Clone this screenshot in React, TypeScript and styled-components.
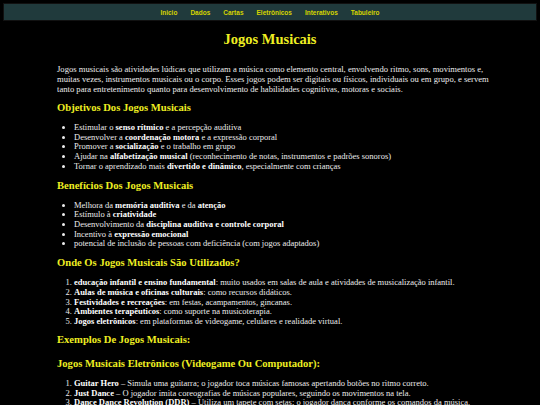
import React from "react";
import styled, { createGlobalStyle } from "styled-components";

const GlobalStyle = createGlobalStyle`
  html, body {
    margin: 0;
    padding: 0;
    background: #000;
  }
  body {
    padding: 3px;
    font-family: "Liberation Serif", "Times New Roman", serif;
    color: #ececec;
  }
`;

const NavBar = styled.nav`
  display: flex;
  justify-content: center;
  align-items: center;
  gap: 13px;
  height: 16px;
  background: #203a3c;
  border: 1px solid #111;
`;

const NavLink = styled.a`
  font-family: "Liberation Sans", Arial, sans-serif;
  font-size: 6.5px;
  font-weight: bold;
  color: #d4d400;
  text-decoration: none;
`;

const Main = styled.main`
  width: 426px;
  margin: 0 auto;
`;

const Title = styled.h1`
  margin: 10px 0 16px;
  text-align: center;
  font-size: 14.5px;
  font-weight: bold;
  color: #eeee22;
`;

const Paragraph = styled.p`
  margin: 0;
  font-size: 8.6px;
  line-height: 10px;
  white-space: nowrap;
`;

const SectionTitle = styled.h2<{ $gap?: number }>`
  margin: ${(p) => p.$gap ?? 8}px 0 10px;
  font-size: 10.6px;
  font-weight: bold;
  color: #eeee22;
`;

const BulletList = styled.ul`
  margin: 0;
  padding-left: 17px;
  font-size: 8.5px;
  line-height: 9.7px;
`;

const NumberList = styled.ol`
  margin: 0;
  padding-left: 17px;
  font-size: 8.5px;
  line-height: 9.75px;
`;

const Item = styled.li`
  & > b {
    color: #fff;
  }
`;

const links = ["Inicio", "Dados", "Cartas", "Eletrônicos", "Interativos", "Tabuleiro"];

export default function App() {
  return (
    <>
      <GlobalStyle />
      <NavBar>
        {links.map((l) => (
          <NavLink key={l} href="#">
            {l}
          </NavLink>
        ))}
      </NavBar>
      <Main>
        <Title>Jogos Musicais</Title>
        <Paragraph>
          Jogos musicais são atividades lúdicas que utilizam a música como elemento central, envolvendo ritmo, sons, movimentos e,
          <br />
          muitas vezes, instrumentos musicais ou o corpo. Esses jogos podem ser digitais ou físicos, individuais ou em grupo, e servem
          <br />
          tanto para entretenimento quanto para desenvolvimento de habilidades cognitivas, motoras e sociais.
        </Paragraph>

        <SectionTitle>Objetivos Dos Jogos Musicais</SectionTitle>
        <BulletList>
          <Item>Estimular o <b>senso rítmico</b> e a percepção auditiva</Item>
          <Item>Desenvolver a <b>coordenação motora</b> e a expressão corporal</Item>
          <Item>Promover a <b>socialização</b> e o trabalho em grupo</Item>
          <Item>Ajudar na <b>alfabetização musical</b> (reconhecimento de notas, instrumentos e padrões sonoros)</Item>
          <Item>Tornar o aprendizado mais <b>divertido e dinâmico</b>, especialmente com crianças</Item>
        </BulletList>

        <SectionTitle>Benefícios Dos Jogos Musicais</SectionTitle>
        <BulletList>
          <Item>Melhora da <b>memória auditiva</b> e da <b>atenção</b></Item>
          <Item>Estímulo à <b>criatividade</b></Item>
          <Item>Desenvolvimento da <b>disciplina auditiva e controle corporal</b></Item>
          <Item>Incentivo à <b>expressão emocional</b></Item>
          <Item>potencial de inclusão de pessoas com deficiência (com jogos adaptados)</Item>
        </BulletList>

        <SectionTitle>Onde Os Jogos Musicais São Utilizados?</SectionTitle>
        <NumberList>
          <Item><b>educação infantil e ensino fundamental</b>: muito usados em salas de aula e atividades de musicalização infantil.</Item>
          <Item><b>Aulas de música e oficinas culturais</b>: como recursos didáticos.</Item>
          <Item><b>Festividades e recreações</b>: em festas, acampamentos, gincanas.</Item>
          <Item><b>Ambientes terapêuticos</b>: como suporte na musicoterapia.</Item>
          <Item><b>Jogos eletrônicos</b>: em plataformas de videogame, celulares e realidade virtual.</Item>
        </NumberList>

        <SectionTitle $gap={7}>Exemplos De Jogos Musicais:</SectionTitle>
        <SectionTitle $gap={13}>Jogos Musicais Eletrônicos (Videogame Ou Computador):</SectionTitle>
        <NumberList>
          <Item><b>Guitar Hero</b> – Simula uma guitarra; o jogador toca músicas famosas apertando botões no ritmo correto.</Item>
          <Item><b>Just Dance</b> – O jogador imita coreografias de músicas populares, seguindo os movimentos na tela.</Item>
          <Item><b>Dance Dance Revolution (DDR)</b> – Utiliza um tapete com setas; o jogador dança conforme os comandos da música.</Item>
          <Item><b>Rock Band</b> – Permite tocar vários instrumentos em grupo, como guitarra, bateria e vocal.</Item>
        </NumberList>
      </Main>
    </>
  );
}
